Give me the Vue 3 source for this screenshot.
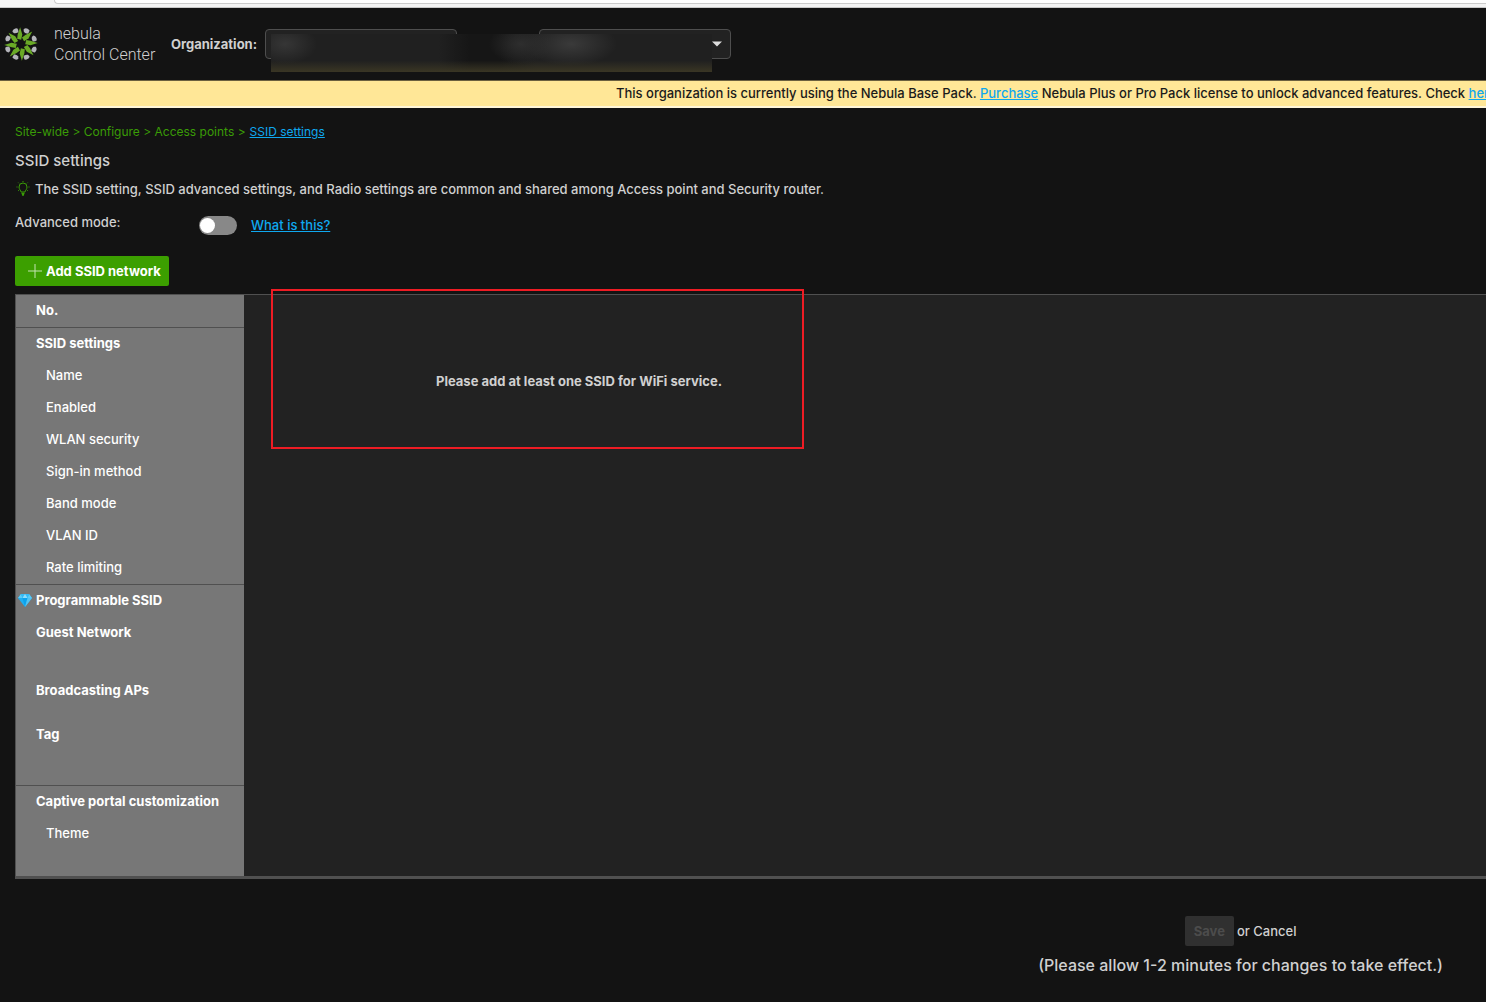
<template>
  <div class="page">
    <div class="browser-strip">
      <div class="address-bar"></div>
    </div>

    <header class="topbar">
      <svg class="logo" viewBox="-17 -17 34 34" aria-hidden="true">
        <g v-for="angle in logoAngles" :key="angle" :transform="`rotate(${angle})`">
          <path
            fill="#b4b4ba"
            d="M3.4 -14.6 Q6.2 -16.6 9.2 -13.4 Q9.2 -11.4 7 -9.8 Q4 -10.8 3.4 -12.4 Z"
          />
          <path fill="#6aaa26" d="M0 -16.8 L1.8 -9.4 L0.4 -4.2 L-3.6 -5.4 L-2.8 -9.6 Z" />
        </g>
      </svg>
      <div class="brand">
        <span>nebula</span>
        <span>Control Center</span>
      </div>
      <label class="org-label" for="organization">Organization:</label>
      <div class="selectors">
        <select id="organization" class="selector" aria-label="Organization"></select>
        <div class="selector-box">
          <select id="site" class="selector" aria-label="Site"></select>
          <svg class="caret" viewBox="0 0 10 6" aria-hidden="true">
            <path d="M0 0.5 H10 L5 5.5 Z" fill="#ddd" />
          </svg>
        </div>
        <div class="privacy-mask">
          <div class="mask-fill"></div>
        </div>
      </div>
    </header>

    <div class="notice">
      This organization is currently using the Nebula Base Pack.
      <a href="#">Purchase</a> Nebula Plus or Pro Pack license to unlock advanced features. Check
      <a href="#">here</a>
    </div>

    <main class="content">
      <nav class="breadcrumb">
        <span>Site-wide &gt; Configure &gt; Access points &gt;</span>
        <a href="#">SSID settings</a>
      </nav>
      <h1 class="title">SSID settings</h1>
      <p class="hint">
        <svg class="bulb" viewBox="0 0 16 16" fill="none" stroke="#3a9c06" aria-hidden="true">
          <path d="M6 11 C6 9.4 4 8.6 4 6 A4 4 0 0 1 12 6 C12 8.6 10 9.4 10 11 Z" />
          <path d="M6.5 12.5 H9.5 M7 14 H9" stroke-width="1.5" />
          <path d="M8 0 V1 M3.3 1.6 L4 2.3 M12.7 1.6 L12 2.3 M1.5 6 H2.5 M13.5 6 H14.5 M3.2 9.8 L4 9.2 M12.8 9.8 L12 9.2" />
        </svg>
        <span>The SSID setting, SSID advanced settings, and Radio settings are common and shared among Access point and Security router.</span>
      </p>
      <div class="mode">
        <label class="mode-label" for="advanced">Advanced mode:</label>
        <input id="advanced" v-model="advanced" class="toggle" type="checkbox" />
        <a href="#">What is this?</a>
      </div>

      <button class="add-btn" type="button">
        <svg class="plus" viewBox="0 0 14 14" aria-hidden="true">
          <path d="M7 0 V14 M0 7 H14" stroke="#c4e3b3" fill="none" />
        </svg>
        Add SSID network
      </button>

      <table class="ssid-table">
        <tbody>
          <tr v-for="(row, index) in rows" :key="row.label">
            <th scope="row" :class="[row.type, row.size, { divided: row.divided }]">
              <svg v-if="row.gem" class="gem" viewBox="0 0 14 13" aria-hidden="true">
                <path d="M3 0 H11 L14 4 L7 13 L0 4 Z" fill="#1eb0f4" />
                <path d="M3 0 L4.5 4 H0 Z M11 0 L9.5 4 H14 Z" fill="#5cccf9" />
                <path d="M3 0 H11 L9.5 4 H4.5 Z" fill="#35baf6" />
                <path d="M7 0 L9.5 4 H4.5 Z" fill="#8eddfb" />
                <path d="M4.5 4 H9.5 L7 13 Z" fill="#0da2ed" />
                <path d="M9.5 4 H14 L7 13 Z" fill="#54c4f3" />
              </svg>
              {{ row.label }}
            </th>
            <td v-if="index === 0" class="panel" :rowspan="rows.length">
              <div class="empty-text">Please add at least one SSID for WiFi service.</div>
              <div class="highlight"></div>
            </td>
          </tr>
        </tbody>
      </table>
    </main>

    <footer class="actions">
      <div class="action-row">
        <button class="save-btn" type="button" disabled>Save</button>
        <span>or <a class="cancel" href="#">Cancel</a></span>
      </div>
      <p class="delay">(Please allow 1-2 minutes for changes to take effect.)</p>
    </footer>
  </div>
</template>

<script setup>
import { ref } from 'vue'

const advanced = ref(false)

const logoAngles = [-3, 42, 87, 132, 177, 222, 267, 312]

const rows = [
  { label: 'No.', type: 'group', divided: true },
  { label: 'SSID settings', type: 'group' },
  { label: 'Name', type: 'item' },
  { label: 'Enabled', type: 'item' },
  { label: 'WLAN security', type: 'item' },
  { label: 'Sign-in method', type: 'item' },
  { label: 'Band mode', type: 'item' },
  { label: 'VLAN ID', type: 'item' },
  { label: 'Rate limiting', type: 'item', divided: true },
  { label: 'Programmable SSID', type: 'group', gem: true },
  { label: 'Guest Network', type: 'group', size: 'tall' },
  { label: 'Broadcasting APs', type: 'group', size: 'medium' },
  { label: 'Tag', type: 'group', size: 'taller', divided: true },
  { label: 'Captive portal customization', type: 'group' },
  { label: 'Theme', type: 'item', size: 'tall' }
]
</script>

<style>
body {
  margin: 0;
  background: #131313;
}
</style>

<style scoped>
.page {
  min-height: 100vh;
  overflow: hidden;
  background: #131313;
  color: #d0d0d0;
  font-family: Inter, "Liberation Sans", sans-serif;
  font-size: 13px;
  font-weight: 500;
  line-height: 20px;
}
.page a {
  color: #0fa8ef;
}
.browser-strip {
  height: 7px;
  padding-left: 54px;
  background: #f4f4f4;
  border-bottom: 1px solid #c8c8c8;
  overflow: hidden;
}
.address-bar {
  height: 3px;
  background: #fff;
  border: 1px solid #ccc;
  border-width: 0 0 1px 1px;
  border-radius: 0 0 0 12px;
}
.topbar {
  display: flex;
  align-items: center;
  height: 72px;
  padding-left: 4px;
  border-bottom: 1px solid #6b603f;
}
.logo {
  width: 34px;
  height: 34px;
}
.brand {
  display: flex;
  flex-direction: column;
  width: 117px;
  margin-left: 16px;
  font-family: Roboto, sans-serif;
  font-size: 16px;
  font-weight: 300;
  line-height: 21px;
}
.org-label {
  width: 94px;
  font-weight: 700;
  white-space: nowrap;
}
.selectors {
  position: relative;
  display: flex;
  gap: 82px;
}
.selector {
  display: block;
  width: 192px;
  height: 30px;
  appearance: none;
  background: #222;
  border: 1px solid #4e4e4e;
  border-radius: 4px;
}
.selector-box {
  position: relative;
}
.caret {
  position: absolute;
  top: 12px;
  right: 9px;
  width: 10px;
  height: 6px;
}
.privacy-mask {
  position: absolute;
  top: 5px;
  left: 6px;
  width: 441px;
  height: 38px;
  overflow: hidden;
  background: #202020;
}
.mask-fill {
  height: 100%;
  background:
    linear-gradient(to bottom, transparent 70%, #3a3624 100%),
    radial-gradient(ellipse 32px 20px at 14px 10px, #363636, transparent),
    radial-gradient(ellipse 32px 20px at 250px 10px, #2e2e2e, transparent),
    radial-gradient(ellipse 46px 22px at 300px 10px, #3a3a3a, transparent),
    linear-gradient(to right, transparent 38%, #161616 45%, #161616 52%, transparent 60%);
}
.notice {
  height: 25px;
  padding-left: 616px;
  background: #ffe797;
  border-bottom: 2px solid #fff6d8;
  color: #1b1b1b;
  line-height: 25px;
  white-space: nowrap;
  overflow: hidden;
}
.content {
  padding: 14px 0 0 15px;
}
.breadcrumb {
  display: flex;
  gap: 4px;
  color: #3a9c06;
  font-size: 12px;
  font-weight: 400;
}
.title {
  margin: 9px 0 8px;
  font-size: 15px;
  font-weight: 500;
}
.hint {
  display: flex;
  align-items: center;
  gap: 4px;
  margin: 0;
  white-space: nowrap;
}
.bulb {
  width: 16px;
  height: 16px;
}
.mode {
  display: flex;
  align-items: center;
  margin: 13px 0 18px;
}
.mode-label {
  width: 184px;
  padding-bottom: 6px;
}
.toggle {
  display: flex;
  align-items: center;
  width: 38px;
  height: 19px;
  margin: 0 14px 0 0;
  padding: 0 1px;
  appearance: none;
  background: #888;
  border-radius: 10px;
}
.toggle::before {
  content: "";
  width: 15px;
  height: 15px;
  background: #fff;
  border-radius: 50%;
}
.toggle:checked {
  background: #3c9f00;
}
.toggle:checked::before {
  margin-left: auto;
}
.add-btn {
  display: flex;
  align-items: center;
  gap: 4px;
  height: 30px;
  padding: 0 8px 0 13px;
  background: #3c9f00;
  border: 0;
  border-radius: 2px;
  color: #fff;
  font: inherit;
  font-weight: 700;
}
.plus {
  width: 14px;
  height: 14px;
}
.ssid-table {
  width: 100%;
  margin-top: 8px;
  border: 1px solid #505050;
  border-width: 1px 0 3px 1px;
  border-spacing: 0;
}
th {
  position: relative;
  box-sizing: border-box;
  width: 228px;
  height: 32px;
  padding: 5px 0 0 20px;
  background: #777;
  color: #fff;
  text-align: left;
  vertical-align: top;
  white-space: nowrap;
}
.item {
  padding-left: 30px;
  font-weight: 500;
}
.divided {
  height: 33px;
  border-bottom: 1px solid #505050;
}
.medium {
  height: 44px;
}
.tall {
  height: 58px;
}
.taller {
  height: 67px;
}
.gem {
  position: absolute;
  top: 9px;
  left: 2px;
  width: 14px;
  height: 13px;
}
.panel {
  position: relative;
  padding: 76px 0 0 192px;
  background: #222;
  font-weight: 700;
  vertical-align: top;
}
.highlight {
  position: absolute;
  top: -6px;
  left: 27px;
  box-sizing: border-box;
  width: 533px;
  height: 160px;
  border: 2px solid #ee1c24;
}
.actions {
  display: flex;
  flex-direction: column;
  align-items: center;
  width: max-content;
  margin: 37px 43px 0 auto;
}
.action-row {
  display: flex;
  align-items: center;
  gap: 3px;
}
.save-btn {
  height: 30px;
  padding: 0 9px;
  background: #303030;
  border: 0;
  border-radius: 2px;
  color: #4c4c4c;
  font: inherit;
  font-weight: 700;
}
.page .cancel {
  color: inherit;
  text-decoration: none;
}
.delay {
  margin: 9px 0 0;
  font-size: 16px;
}
</style>
